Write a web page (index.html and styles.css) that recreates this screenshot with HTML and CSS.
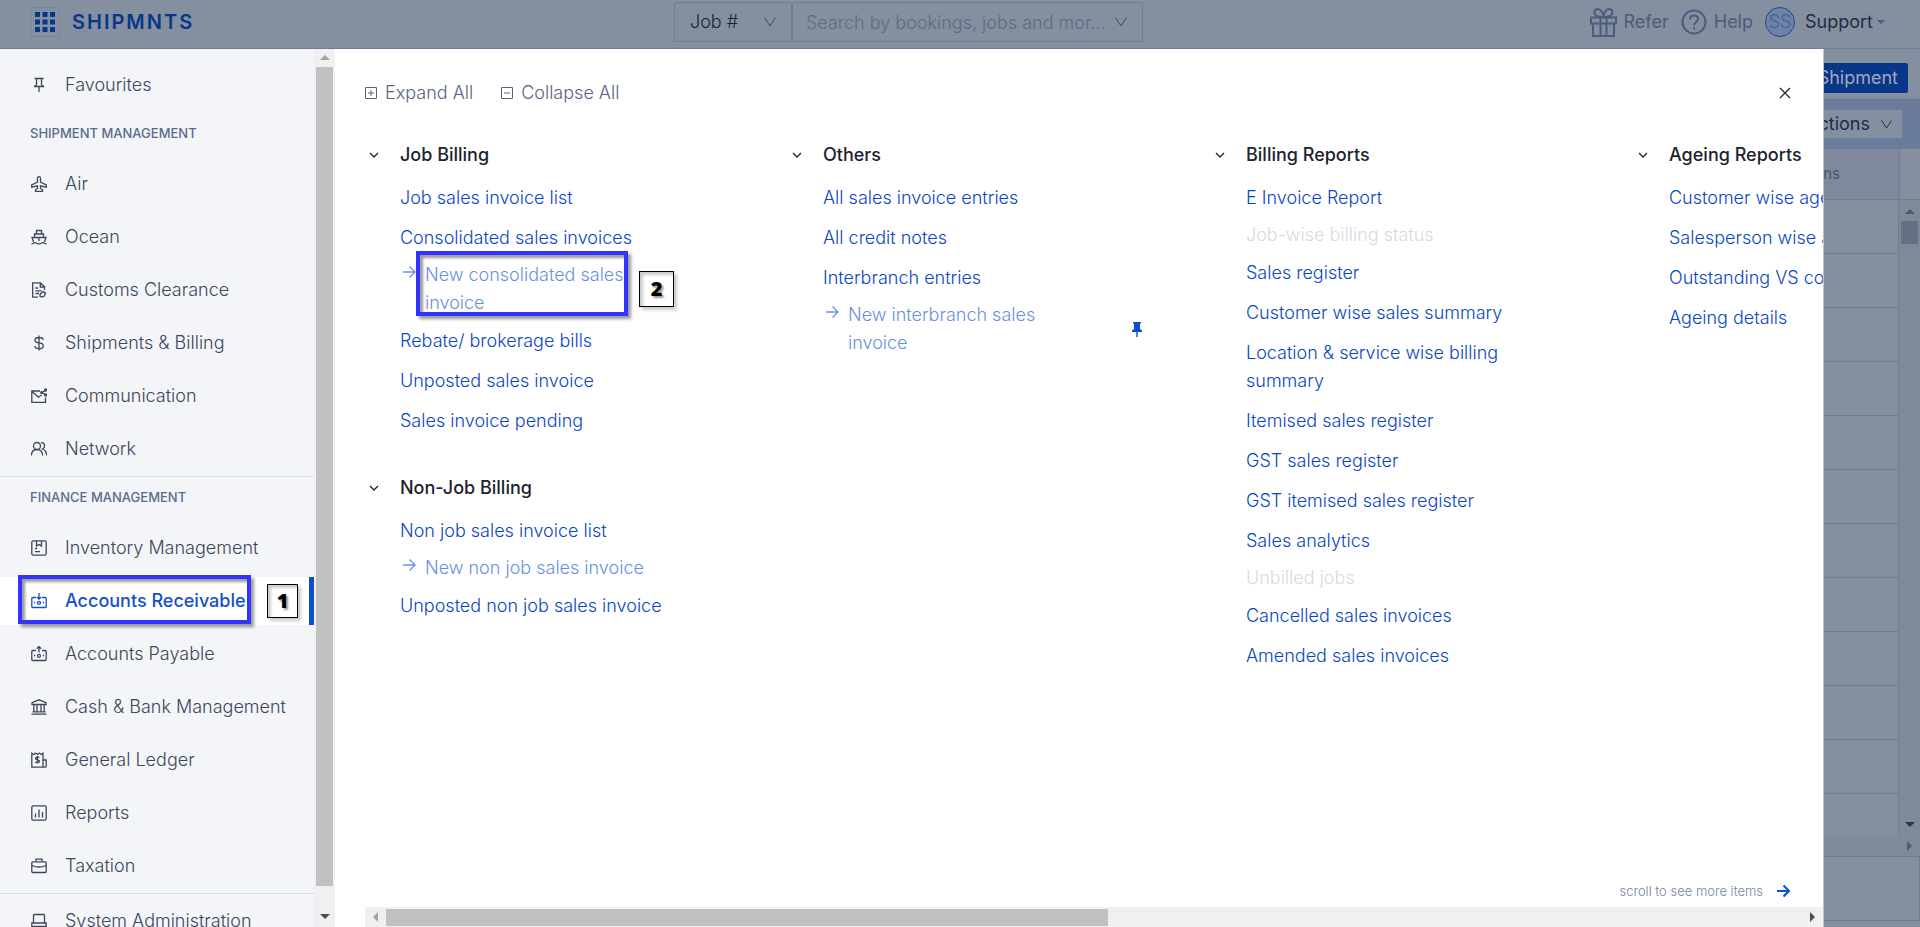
FILE: index.html
```html
<!DOCTYPE html>
<html lang="en">
<head>
<meta charset="utf-8">
<meta name="viewport" content="width=device-width, initial-scale=1">
<title>Shipmnts</title>
<link rel="stylesheet" href="styles.css">
</head>
<body>
<svg class="sprite" aria-hidden="true">
  <symbol id="chevron" viewBox="0 0 12 12"><path d="M2 4l4 4 4-4"/></symbol>
  <symbol id="chevron-thin" viewBox="0 0 14 12"><path d="M1.500 1.500L7 10l5.500-8.500"/></symbol>
  <symbol id="arrow" viewBox="0 0 14 14"><path d="M1 7h11.500M7.500 1.500L13 7l-5.500 5.500"/></symbol>
</svg>
<header class="topbar">
  <div class="brand">
    <button class="apps" type="button" aria-label="Apps">
      <svg viewBox="0 0 20 20"><path d="M0 0h5v5H0zM7.500 0h5v5h-5zM15 0h5v5h-5zM0 7.500h5v5H0zM7.500 7.500h5v5h-5zM15 7.500h5v5h-5zM0 15h5v5H0zM7.500 15h5v5h-5zM15 15h5v5h-5z"/></svg>
    </button>
    <a class="wordmark" href="#">SHIPMNTS</a>
  </div>
  <form class="search">
    <div class="field field-type">
      <select class="control" aria-label="Search type"><option>Job #</option></select>
      <svg class="field-icon"><use href="#chevron-thin"/></svg>
    </div>
    <div class="field field-query">
      <input class="control" type="text" aria-label="Search" placeholder="Search by bookings, jobs and mor...">
      <svg class="field-icon"><use href="#chevron-thin"/></svg>
    </div>
  </form>
  <div class="account">
    <a class="account-link" href="#"><svg class="gift" viewBox="0 0 27 30"><path d="M1 10.500h25v6H1zM3 16.500v12.500h21V16.500M10.500 10.500v18.500M16.500 10.500v18.500M13.500 10C9 10 4.500 8.500 4.500 5.500c0-2 1.500-3.500 3.500-3.500 3 0 5.500 4.500 5.500 8zM13.500 10c4.500 0 9-1.500 9-4.500 0-2-1.500-3.500-3.500-3.500-3 0-5.500 4.500-5.500 8z"/></svg>Refer</a>
    <a class="account-link" href="#"><svg class="help" viewBox="0 0 26 26"><circle cx="13" cy="13" r="11.500"/><path d="M9 10.500c0-2.500 1.700-4 4-4s4 1.500 4 3.500c0 3-4 3-4 6.500M13 18.200v2.300"/></svg>Help</a>
    <button class="user" type="button"><span class="avatar">SS</span>Support<span class="caret"></span></button>
  </div>
</header>
<div class="workspace">
  <nav class="sidebar">
    <div class="sidebar-body">
      <a class="nav-item nav-favourites" href="#"><svg class="icon" viewBox="0 0 16 16"><path d="M3.500 1.500h9M5.500 1.500v6.500M10.500 1.500v6.500M3 9.500h10M5.500 8L3 9.500M10.500 8L13 9.500M8 9.500v5.500"/></svg>Favourites</a>
      <section class="nav-group">
        <h2 class="nav-title">SHIPMENT MANAGEMENT</h2>
        <div class="nav-list">
          <a class="nav-item" href="#"><svg class="icon" viewBox="0 0 16 16"><path d="M6.500 6V2.200c0-2 3-2 3 0V6l5.800 3v2.200L9.500 9.800v2.700l2 1.300v1.700h-7v-1.700l2-1.300V9.800L.7 11.200V9z"/></svg>Air</a>
          <a class="nav-item" href="#"><svg class="icon" viewBox="0 0 16 16"><path d="M2.500 13L1 8.500h14L13.500 13M3.500 8.500V5h9v3.500M5.500 5V1.500h5V5M8 8.500V12M.5 15c2 0 2-1.300 3.700-1.300S6 15 8 15s2-1.300 3.800-1.300S13.500 15 15.500 15"/></svg>Ocean</a>
          <a class="nav-item" href="#"><svg class="icon" viewBox="0 0 16 16"><path d="M7 15.200H1.700V.8h7.800l4 4v3M9.300 1v4h4M4.500 6h2.500M4.500 8.800h6M4.500 11.500h3.500M9.300 12l2.900-2.500 2.300 1.600-1.200 3-2.600 1-1.800-1z"/></svg>Customs Clearance</a>
          <a class="nav-item" href="#"><svg class="icon" viewBox="0 0 16 16"><path d="M12 5V4.300C12 2.800 10.800 2.500 8 2.500S4 3 4 5s1 2.700 4 2.900 4.300 1 4.300 3-1.300 2.700-4.300 2.700-4.200-.8-4.200-2.300V11M8 .5v15"/></svg>Shipments &amp; Billing</a>
          <a class="nav-item" href="#"><svg class="icon" viewBox="0 0 16 16"><path d="M9 3H.8v11.300h13.700V9.500M1 3.500l6.500 5.700L10.500 7M15 2l-4 2.500 4 2.800"/><circle cx="10.700" cy="4.600" r="1"/><circle cx="14.600" cy="2" r="1"/><circle cx="14.600" cy="7" r="1"/></svg>Communication</a>
          <a class="nav-item" href="#"><svg class="icon" viewBox="0 0 16 16"><circle cx="6" cy="5" r="3.500"/><path d="M.3 14.500c.3-3.700 2.500-6 5.700-6s5.400 2.300 5.700 6M10 1.700c4-.3 4.800 4.800 1.500 6.300 2.500.8 4 3 4.200 6.500"/></svg>Network</a>
        </div>
      </section>
      <section class="nav-group">
        <h2 class="nav-title">FINANCE MANAGEMENT</h2>
        <div class="nav-list">
          <a class="nav-item" href="#"><svg class="icon" viewBox="0 0 16 16"><rect x=".8" y=".8" width="14.400" height="14.400" rx="1.500"/><path d="M5.500 1v5L8 4.500l2.500 1.500V1M4 8.500h2M4 11.700h5"/></svg>Inventory Management</a>
          <a class="nav-item nav-item-active" href="#"><svg class="icon" viewBox="0 0 16 16"><path d="M5 4.500H1.800q-1 0-1 1v8q0 1 1 1h12.400q1 0 1-1v-8q0-1-1-1H11M8 0v6M5.800 4L8 6.200 10.200 4M3 9.500h1.200M11.800 9.500H13"/><circle cx="8" cy="9.800" r="1.500"/></svg>Accounts Receivable<span class="mark mark-receivable"></span><span class="step step-one">1</span></a>
          <a class="nav-item" href="#"><svg class="icon" viewBox="0 0 16 16"><path d="M5 4.500H1.800q-1 0-1 1v8q0 1 1 1h12.400q1 0 1-1v-8q0-1-1-1H11M8 6.500V.5M5.800 2.700L8 .5l2.200 2.200M3 9.500h1.200M11.800 9.500H13"/><circle cx="8" cy="9.800" r="1.500"/></svg>Accounts Payable</a>
          <a class="nav-item" href="#"><svg class="icon" viewBox="0 0 16 16"><path d="M1 5.500V3.700L8 .8l7 2.900v1.800zM.5 15.200h15M1.500 12.800h13M2.800 5.500v7M6 5.500v7M10 5.500v7M13.200 5.500v7"/></svg>Cash &amp; Bank Management</a>
          <a class="nav-item" href="#"><svg class="icon" viewBox="0 0 16 16"><path d="M12 8h3.200v6.200c0 .7-.3 1-1 1H.8V1.200l2 1.300L4.700 1l1.900 1.500L8.500 1l1.600 1.500L12 1.200v14M8.300 5.700c-.5-.7-3.800-.9-3.800.8s4 .9 4 2.700-3.500 1.500-4.200.7M6.400 4v7.500"/></svg>General Ledger</a>
          <a class="nav-item" href="#"><svg class="icon" viewBox="0 0 16 16"><rect x=".8" y=".8" width="14.400" height="14.400" rx="1.500"/><path d="M4.500 8.500v4M8 4.500v8M11.500 7v5.500"/></svg>Reports</a>
          <a class="nav-item" href="#"><svg class="icon" viewBox="0 0 16 16"><rect x=".8" y="3.800" width="14.400" height="10.700" rx="1"/><path d="M5 3.500V1.200h6v2.300M1 7.500c4 2 10 2 14 0M6.500 9h3"/></svg>Taxation</a>
        </div>
      </section>
      <section class="nav-group nav-group-last">
        <a class="nav-item" href="#"><svg class="icon" viewBox="0 0 16 16"><path d="M2.500 10V2.500c0-.7.300-1 1-1h9c.7 0 1 .3 1 1V10M.8 10h14.400v3.500H.8z"/></svg>System Administration</a>
      </section>
    </div>
    <div class="vbar"><span class="tip tip-up tip-idle"></span><span class="vbar-thumb"></span><span class="tip tip-down"></span></div>
  </nav>

  <main class="panel">
    <div class="toolbar">
      <button class="tool" type="button"><svg viewBox="0 0 12 12"><path d="M.5.5h11v11H.5zM3 6h6M6 3v6"/></svg>Expand All</button>
      <button class="tool" type="button"><svg viewBox="0 0 12 12"><path d="M.5.5h11v11H.5zM3 6h6"/></svg>Collapse All</button>
      <button class="close" type="button" aria-label="Close"><svg viewBox="0 0 12 12"><path d="M1 1l10 10M11 1L1 11"/></svg></button>
    </div>
    <div class="columns">
      <div class="column">
        <section class="menu">
          <button class="menu-title" type="button"><svg><use href="#chevron"/></svg>Job Billing</button>
          <div class="links">
            <a class="link" href="#">Job sales invoice list</a>
            <a class="link" href="#">Consolidated sales invoices</a>
            <a class="child" href="#"><svg><use href="#arrow"/></svg><span class="child-text">New consolidated sales invoice</span><span class="mark mark-consolidated"></span><span class="step step-two">2</span></a>
            <a class="link" href="#">Rebate/ brokerage bills</a>
            <a class="link" href="#">Unposted sales invoice</a>
            <a class="link" href="#">Sales invoice pending</a>
          </div>
        </section>
        <section class="menu">
          <button class="menu-title" type="button"><svg><use href="#chevron"/></svg>Non-Job Billing</button>
          <div class="links">
            <a class="link" href="#">Non job sales invoice list</a>
            <a class="child" href="#"><svg><use href="#arrow"/></svg><span class="child-text">New non job sales invoice</span></a>
            <a class="link" href="#">Unposted non job sales invoice</a>
          </div>
        </section>
      </div>
      <div class="column">
        <section class="menu">
          <button class="menu-title" type="button"><svg><use href="#chevron"/></svg>Others</button>
          <div class="links">
            <a class="link" href="#">All sales invoice entries</a>
            <a class="link" href="#">All credit notes</a>
            <a class="link" href="#">Interbranch entries</a>
            <div class="pinned">
              <a class="child" href="#"><svg><use href="#arrow"/></svg><span class="child-text">New interbranch sales invoice</span></a>
              <button class="pin" type="button" aria-label="Pin"><svg viewBox="0 0 10 15"><path d="M1 0h8v1.500H8v5.500l2 1.500V10H5.700v5H4.300v-5H0V8.500L2 7V1.500H1z"/></svg></button>
            </div>
          </div>
        </section>
      </div>
      <div class="column">
        <section class="menu">
          <button class="menu-title" type="button"><svg><use href="#chevron"/></svg>Billing Reports</button>
          <div class="links">
            <a class="link" href="#">E Invoice Report</a>
            <span class="disabled">Job-wise billing status</span>
            <a class="link" href="#">Sales register</a>
            <a class="link" href="#">Customer wise sales summary</a>
            <a class="link" href="#">Location &amp; service wise billing summary</a>
            <a class="link" href="#">Itemised sales register</a>
            <a class="link" href="#">GST sales register</a>
            <a class="link" href="#">GST itemised sales register</a>
            <a class="link" href="#">Sales analytics</a>
            <span class="disabled">Unbilled jobs</span>
            <a class="link" href="#">Cancelled sales invoices</a>
            <a class="link" href="#">Amended sales invoices</a>
          </div>
        </section>
      </div>
      <div class="column">
        <section class="menu">
          <button class="menu-title" type="button"><svg><use href="#chevron"/></svg>Ageing Reports</button>
          <div class="links">
            <a class="link" href="#">Customer wise ageing</a>
            <a class="link" href="#">Salesperson wise ageing</a>
            <a class="link" href="#">Outstanding VS collection</a>
            <a class="link" href="#">Ageing details</a>
          </div>
        </section>
      </div>
    </div>
    <div class="hint">scroll to see more items<svg><use href="#arrow"/></svg></div>
    <div class="hbar"><span class="tip tip-left tip-idle"></span><span class="hbar-track"><span class="hbar-thumb"></span></span><span class="tip tip-right"></span></div>
  </main>

  <aside class="page">
    <div class="page-actions"><button class="primary" type="button">Shipment</button></div>
    <div class="page-filters"><button class="actions" type="button">Actions<svg><use href="#chevron-thin"/></svg></button></div>
    <div class="page-head"><div class="page-th">Actions</div></div>
    <div class="page-grid">
      <div class="page-rows">
        <div class="page-row"></div><div class="page-row"></div><div class="page-row"></div><div class="page-row"></div>
        <div class="page-row"></div><div class="page-row"></div><div class="page-row"></div><div class="page-row"></div>
        <div class="page-row"></div><div class="page-row"></div><div class="page-row"></div><div class="page-row"></div>
      </div>
      <div class="page-vbar"><span class="tip tip-up"></span><span class="page-thumb"></span><span class="tip tip-down"></span></div>
    </div>
    <div class="page-hbar"><span class="tip tip-right"></span></div>
    <div class="page-footer"></div>
  </aside>
</div>
</body>
</html>
```
FILE: styles.css
```css
* { box-sizing: border-box; }

body {
  margin: 0;
  height: 100vh;
  display: flex;
  flex-direction: column;
  overflow: hidden;
  font-family: Inter, "Liberation Sans", sans-serif;
  font-size: 18px;
  font-weight: 300;
  line-height: 28px;
  color: #3c475a;
  background: #fff;
}

a { color: inherit; text-decoration: none; }

button {
  margin: 0;
  padding: 0;
  border: 0;
  background: none;
  color: inherit;
  font: inherit;
}

svg { fill: none; stroke: currentColor; flex: none; }
.sprite { display: none; }

/* Top bar */
.topbar {
  flex: none;
  display: grid;
  grid-template-columns: 674px minmax(300px, 469px) 1fr;
  align-items: start;
  height: 49px;
  padding-top: 2px;
  background: #848fa0;
  border-bottom: 1px solid #707e9a;
}

.brand {
  display: flex;
  align-items: center;
  gap: 12px;
  height: 40px;
  padding-left: 30px;
}

.apps {
  display: flex;
  align-items: center;
  justify-content: center;
  width: 30px;
  height: 30px;
  border: 1px solid #7484a2;
  border-radius: 2px;
}
.apps svg { width: 20px; height: 20px; fill: #083789; stroke: none; }

.wordmark {
  color: #083789;
  font-size: 20px;
  font-weight: 600;
  letter-spacing: 2px;
}

.search { display: flex; }
.field { display: grid; align-items: center; }
.field-type { width: 118px; }
.field-query { flex: 1; }

.control {
  grid-area: 1 / 1;
  width: 100%;
  height: 40px;
  padding: 0 34px 0 13px;
  border: 1px solid #717c90;
  border-radius: 2px;
  background: transparent;
  color: #1a2438;
  font: inherit;
  appearance: none;
}
.field-type .control { padding-left: 15px; }
.control::placeholder { color: #616b7f; opacity: 1; }

.field-icon {
  grid-area: 1 / 1;
  justify-self: end;
  width: 14px;
  height: 12px;
  margin-right: 15px;
  color: #3f4a5e;
}

.account {
  display: flex;
  align-items: center;
  justify-content: flex-end;
  gap: 12px;
  height: 40px;
  padding-right: 35px;
  font-weight: 400;
  color: #4b5c7c;
}
.account-link { display: flex; align-items: center; gap: 7px; }
.gift { width: 27px; height: 30px; stroke-width: 2; }
.help { width: 26px; height: 26px; stroke-width: 2; }
.user { display: flex; align-items: center; color: #1f2c44; }
.avatar {
  width: 30px;
  height: 30px;
  margin-right: 10px;
  border: 1px solid #1c4796;
  border-radius: 50%;
  background: #7082a4;
  color: #4163a5;
  font-weight: 300;
}
.caret {
  margin-left: 4px;
  border: 4px solid transparent;
  border-top-color: #4b5c7c;
  border-bottom: 0;
}

/* Workspace */
.workspace { flex: 1; min-height: 0; display: flex; }

/* Sidebar */
.sidebar { flex: none; display: flex; background: #f3f5f9; }
.sidebar-body {
  width: 314px;
  padding-top: 12px;
  overflow: hidden;
}

.nav-item {
  position: relative;
  display: flex;
  align-items: center;
  gap: 17px;
  height: 48px;
  padding-left: 30px;
}
.nav-favourites { margin-bottom: 4px; }
.nav-item-active {
  background: #fff;
  border-right: 5px solid #0b4fd0;
  color: #1650c8;
  font-weight: 500;
}
.icon { width: 18px; height: 18px; padding: 1px; stroke-width: 1.3; }

.nav-group { padding-bottom: 3px; border-bottom: 1px solid #d5deea; }
.nav-group-last { padding-top: 3px; border-bottom: 0; }
.nav-title {
  margin: 0;
  padding: 10px 30px 17px;
  font-size: 13px;
  font-weight: 500;
  line-height: 20px;
  color: #5a6b8c;
}
.nav-list { display: flex; flex-direction: column; gap: 5px; }

/* Scrollbars */
.vbar, .page-vbar {
  flex: none;
  display: flex;
  flex-direction: column;
  align-items: center;
  justify-content: space-between;
  width: 21px;
  padding: 6px 0 8px;
  background: #f0f0f0;
}
.vbar-thumb {
  flex: 1;
  width: 17px;
  margin: 7px 0 28px;
  background: #c1c1c1;
}

.tip { flex: none; border: 5px solid transparent; }
.tip-up { border-top: 0; border-bottom-color: #4d4d4d; }
.tip-down { border-bottom: 0; border-top-color: #4d4d4d; }
.tip-left { border-left: 0; border-right-color: #4d4d4d; }
.tip-right { border-right: 0; border-left-color: #4d4d4d; }
.tip-up.tip-idle { border-bottom-color: #a3a3a3; }
.tip-left.tip-idle { border-right-color: #a3a3a3; }

.hbar {
  flex: none;
  display: flex;
  align-items: center;
  height: 20px;
  padding: 0 8px;
  background: #f0f0f0;
}
.hbar-track { flex: 1; display: flex; margin: 0 8px; }
.hbar-thumb { width: 51%; height: 17px; background: #c1c1c1; }

/* Menu panel */
.panel {
  flex: 1;
  min-width: 0;
  display: flex;
  flex-direction: column;
  padding-left: 30px;
}

.toolbar {
  display: flex;
  align-items: center;
  gap: 28px;
  padding: 29px 32px 33px 0;
  color: #56647f;
}
.tool { display: flex; align-items: center; gap: 8px; height: 30px; }
.tool svg { width: 12px; height: 12px; }
.close { display: flex; margin-left: auto; color: #222b3a; }
.close svg { width: 12px; height: 12px; stroke-width: 1.3; }

.columns {
  flex: 1;
  min-height: 0;
  display: grid;
  grid-auto-flow: column;
  grid-auto-columns: 423px;
  overflow: hidden;
}

.menu { padding-bottom: 33px; }
.menu-title {
  display: flex;
  align-items: center;
  gap: 20px;
  margin-bottom: 9px;
  padding-left: 3px;
  color: #1d2330;
  font-weight: 500;
}
.menu-title svg { width: 12px; height: 12px; stroke-width: 1.3; }

.links {
  display: flex;
  flex-direction: column;
  align-items: flex-start;
  padding-left: 35px;
  color: #0b46c4;
}
.link { max-width: 280px; padding: 6px 0; }
.disabled { padding: 3px 0 4px; color: #d5dae4; }
.child {
  position: relative;
  display: flex;
  gap: 9px;
  width: 280px;
  padding: 3px 0 4px 2px;
  color: #6a91e0;
}
.child svg { width: 14px; height: 14px; margin-top: 4px; }
.child-text { max-width: 230px; }
.child svg, .hint svg { stroke-width: 1.3; }
.pinned { display: flex; align-items: center; gap: 29px; }
.pin { display: flex; color: #0b4fd0; }
.pin svg { width: 10px; height: 15px; fill: currentColor; stroke: none; }

.hint {
  flex: none;
  display: flex;
  align-items: center;
  justify-content: flex-end;
  gap: 13px;
  padding: 0 33px 6px 0;
  color: #74859f;
  font-size: 13px;
  line-height: 20px;
}
.hint svg { width: 14px; height: 14px; color: #0b4fd0; stroke-width: 2; }

/* Callouts laid over the menus */
.mark {
  position: absolute;
  border: 4px solid #3333ff;
  box-shadow: 3px 3px 3px #0006, inset 3px 3px 3px #0006;
}
.mark-receivable { left: 18px; top: -2px; width: 233px; height: 49px; }
.mark-consolidated { left: 16px; top: -7px; width: 212px; height: 65px; }
.step {
  position: absolute;
  display: flex;
  align-items: center;
  justify-content: center;
  border: 1px solid #000;
  background: #fff;
  box-shadow: 3px 3px 3px #0003, inset 3px 3px 3px #0003;
  color: #000;
  font-family: "Open Sans", sans-serif;
  font-size: 20px;
  font-weight: 800;
  text-shadow: 2px 2px 2px #0006;
}
.step-one { left: 267px; top: 7px; width: 31px; height: 34px; }
.step-two { left: 239px; top: 13px; width: 35px; height: 36px; }

/* Page strip behind the panel */
.page {
  flex: none;
  display: flex;
  flex-direction: column;
  width: 97px;
  overflow: hidden;
  background: #848fa0;
  border-left: 1px solid #c2c7cf;
  font-weight: 400;
}
.page-actions {
  display: flex;
  justify-content: flex-end;
  padding: 14px 12px 5px 0;
  border-bottom: 1px solid #7a879c;
}
.primary {
  height: 30px;
  padding: 0 10px;
  border-radius: 2px;
  background: #083789;
  color: #a0a9b9;
}
.page-filters {
  display: flex;
  justify-content: flex-end;
  padding: 11px 18px 11px 0;
  background: #6b7b9b;
}
.actions {
  display: flex;
  align-items: center;
  gap: 10px;
  height: 28px;
  padding: 0 9px;
  border-radius: 2px;
  background: #848fa0;
  color: #1f2c44;
}
.actions svg { width: 13px; height: 11px; }
.page-head {
  display: flex;
  padding-right: 20px;
  border-bottom: 1px solid #717c91;
}
.page-th {
  flex: 1;
  min-width: 0;
  display: flex;
  align-items: center;
  justify-content: flex-end;
  height: 50px;
  padding-right: 59px;
  border-right: 1px solid #717c91;
  background: #7e899b;
  color: #4a566c;
  font-size: 15px;
}
.page-grid { flex: 1; min-height: 0; display: flex; }
.page-rows { flex: 1; overflow: hidden; border-right: 1px solid #717c91; }
.page-row { height: 54px; border-bottom: 1px solid #717c91; }
.page-vbar { padding-top: 9px; background: #7e899a; }
.page-thumb { width: 17px; height: 23px; margin: 7px 0 auto; background: #667083; }
.page .tip-up { border-bottom-color: #4f5a6d; }
.page .tip-down { border-top-color: #2b3548; }
.page-hbar {
  display: flex;
  align-items: center;
  justify-content: flex-end;
  height: 21px;
  padding-right: 8px;
  background: #7e899a;
}
.page .tip-right { border-left-color: #4f5a6d; }
.page-footer {
  height: 65px;
  margin-bottom: 6px;
  border: 1px solid #717c91;
  border-left: 0;
}
```
